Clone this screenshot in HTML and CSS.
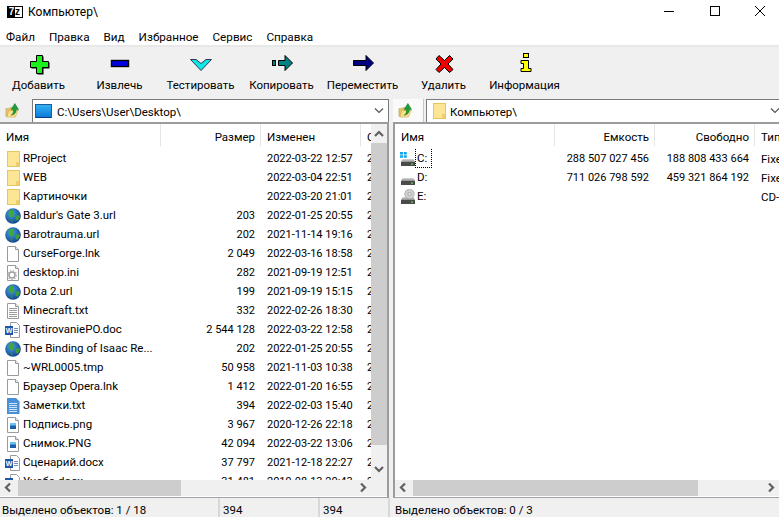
FILE: index.html
```html
<!DOCTYPE html>
<html lang="ru">
<head>
  <meta charset="UTF-8" />
  <title>Компьютер\</title>
  <link rel="stylesheet" href="styles.css">
</head>
<body>
  <svg class="defs" xmlns="http://www.w3.org/2000/svg">
    <defs>
      <radialGradient id="sea" cx="0.4" cy="0.35" r="0.7">
        <stop offset="0" stop-color="#4aa0e8"/><stop offset="1" stop-color="#0c3f8c"/>
      </radialGradient>
      <linearGradient id="screen" x1="0" y1="0" x2="0" y2="1">
        <stop offset="0" stop-color="#35b4f4"/><stop offset="1" stop-color="#0a78d8"/>
      </linearGradient>
      <linearGradient id="metal" x1="0" y1="0" x2="0" y2="1">
        <stop offset="0" stop-color="#d8d8d8"/><stop offset="1" stop-color="#8c8c8c"/>
      </linearGradient>
      <symbol id="i-folder" viewBox="0 0 16 16">
        <rect x="2.500" y="0.500" width="12" height="15" fill="#fde596" stroke="#e8c65f"/>
        <rect x="11" y="11" width="3" height="4" fill="#f0cd6c"/>
      </symbol>
      <symbol id="i-globe" viewBox="0 0 16 16">
        <circle cx="8" cy="8" r="7.800" fill="url(#sea)"/>
        <path d="M4 2.500c2-1 4-1 5 0l-1 2.500 1.500 2-2 2.500-2-.5-2-3z" fill="#3fa83c"/>
        <path d="M10.500 8l3.500-1 1 2-2.500 4-2-1.500z" fill="#3f9c3a"/>
        <path d="M5 11l2 .5 .5 3-1.500-.5z" fill="#2f8a36"/>
      </symbol>
      <symbol id="i-file" viewBox="0 0 16 16">
        <path d="M2.500 .5h8l3 3v12h-11z" fill="#fff" stroke="#9a9a9a"/>
        <path d="M10.500 .5v3h3" fill="#eee" stroke="#9a9a9a"/>
      </symbol>
      <symbol id="i-ini" viewBox="0 0 16 16">
        <use href="#i-file"/>
        <circle cx="7" cy="10" r="3" fill="none" stroke="#a0a0a0" stroke-width="1.600"/>
        <circle cx="7" cy="10" r="4.400" fill="none" stroke="#b4b4b4" stroke-width="1.200" stroke-dasharray="1.500 1.500"/>
      </symbol>
      <symbol id="i-txt" viewBox="0 0 16 16">
        <use href="#i-file"/>
        <path d="M4 5.500h8M4 7.500h8M4 9.500h8M4 11.500h8M4 13.500h8" stroke="#9c9c9c"/>
      </symbol>
      <symbol id="i-note" viewBox="0 0 16 16">
        <path d="M2 0h9l3.500 3.500V16H2z" fill="#4a90d8"/>
        <path d="M4 5.500h8M4 7.500h8M4 9.500h8M4 11.500h8M4 13.500h8" stroke="#cfe4f8"/>
      </symbol>
      <symbol id="i-png" viewBox="0 0 16 16">
        <use href="#i-file"/>
        <rect x="5" y="6" width="6" height="6" fill="#1d5fa8"/>
        <rect x="5" y="6" width="6" height="2.500" fill="#6cc0ee"/>
      </symbol>
      <symbol id="i-word" viewBox="0 0 16 16">
        <path d="M5.500 .5h6l3 3v12h-9z" fill="#fff" stroke="#9a9a9a"/>
        <path d="M9 6.500h4M9 8.500h4M9 10.500h4" stroke="#6a8fc0"/>
        <rect x="0" y="4" width="8" height="9" fill="#1f57a8"/>
        <text x="4" y="11" class="word-mark">W</text>
      </symbol>
      <symbol id="i-drive" viewBox="0 0 16 16">
        <path d="M2.500 8h11l1.500 3H1z" fill="url(#metal)"/>
        <rect x="1" y="11" width="14" height="4" fill="#4a4a4a"/>
        <rect x="11" y="12.500" width="2" height="1.200" fill="#4fe04f"/>
      </symbol>
      <symbol id="i-drive-c" viewBox="0 0 16 16">
        <use href="#i-drive"/>
        <path d="M0 1h3v2.500H0zM3.800 1h3v2.500h-3zM0 4.300h3v2.500H0zM3.800 4.300h3v2.500h-3z" fill="#12a4ee"/>
      </symbol>
      <symbol id="i-drive-e" viewBox="0 0 16 16">
        <use href="#i-drive"/>
        <circle cx="9.500" cy="5" r="4.800" fill="#cfcfcf" stroke="#9a9a9a" stroke-width=".6"/>
        <circle cx="9.500" cy="5" r="1.500" fill="#f4f4f4" stroke="#808080" stroke-width=".6"/>
      </symbol>
      <symbol id="i-up" viewBox="0 0 16 16">
        <path d="M1 6h3l1-1h5v9H1z" fill="#e8c468" stroke="#b89a48" stroke-width=".6"/>
        <path d="M2 15l2-7h10l-3 7z" fill="#fbe08a" stroke="#c8a850" stroke-width=".6"/>
        <path d="M6.500 13c2.500-1 2.500-3 2.500-6H6.500L10.500.5 14.500 7H12c0 3-1.500 5.500-5.500 6z" fill="#18a038" stroke="#0e6a24" stroke-width=".5"/>
      </symbol>
    </defs>
  </svg>

  <header class="titlebar">
    <span class="app-logo"><b>7</b>z</span>
    <span class="title-text">Компьютер\</span>
    <div class="win-buttons">
      <span class="win-btn"><svg width="12" height="12" viewBox="0 0 12 12"><path d="M1 6.500h10" stroke="#000"/></svg></span>
      <span class="win-btn"><svg width="12" height="12" viewBox="0 0 12 12"><rect x="1.500" y="1.500" width="9" height="9" fill="none" stroke="#000"/></svg></span>
      <span class="win-btn"><svg width="12" height="12" viewBox="0 0 12 12"><path d="M1 1l10 10M11 1L1 11" stroke="#000"/></svg></span>
    </div>
  </header>

  <nav class="menu">
    <span>Файл</span><span>Правка</span><span>Вид</span><span>Избранное</span><span>Сервис</span><span>Справка</span>
  </nav>

  <div class="toolbar">
    <div class="tool">
      <svg class="tool-icon" viewBox="0 0 24 24">
        <path d="M10.500 4.500h6v6h6v6h-6v6h-6v-6h-6v-6h6z" fill="#000"/>
        <path d="M9.500 3.500h6v6h6v6h-6v6h-6v-6h-6v-6h6z" fill="#1cf01c" stroke="#000"/>
      </svg>
      <span>Добавить</span>
    </div>
    <div class="tool">
      <svg class="tool-icon" viewBox="0 0 24 24">
        <rect x="3.500" y="8.500" width="17" height="6" fill="#0000e6" stroke="#000" stroke-width="1.400"/>
      </svg>
      <span>Извлечь</span>
    </div>
    <div class="tool">
      <svg class="tool-icon" viewBox="0 0 24 24">
        <path d="M1.500 7.500H7l5 4 5-4h5.500L12 18.500z" fill="#0fe6e6" stroke="#335"/>
      </svg>
      <span>Тестировать</span>
    </div>
    <div class="tool">
      <svg class="tool-icon" viewBox="0 0 24 24">
        <rect x="2.500" y="8.500" width="3" height="5" fill="#008080" stroke="#000"/>
        <path d="M8.500 8.500H15V3.500L22.500 11 15 18.500V13.500H8.500z" fill="#008080" stroke="#000"/>
      </svg>
      <span>Копировать</span>
    </div>
    <div class="tool">
      <svg class="tool-icon" viewBox="0 0 24 24">
        <path d="M2.500 8.500H15V3.500L22.500 11 15 18.500V13.500H2.500z" fill="#000080" stroke="#000"/>
      </svg>
      <span>Переместить</span>
    </div>
    <div class="tool">
      <svg class="tool-icon" viewBox="0 0 24 24">
        <path d="M7 3.500l5.500 5 5-5 3.500 3.500-5 5 5 5.500-3.500 3-5-5-5.500 5L4 17.500l5-5.500-5-5z" fill="#f00000" stroke="#000"/>
      </svg>
      <span>Удалить</span>
    </div>
    <div class="tool">
      <svg class="tool-icon" viewBox="0 0 24 24">
        <rect x="10.500" y="1.500" width="5" height="4" fill="#ffff00" stroke="#000"/>
        <path d="M8 8.500h7.500v8h2.500v3H8v-3h2.500v-5H8z" fill="#ffff00" stroke="#000"/>
      </svg>
      <span>Информация</span>
    </div>
  </div>

  <main class="panes">
    <section class="pane pane-left">
      <div class="pathbar">
        <span class="up-btn"><svg class="up-icon" viewBox="0 0 16 16"><use href="#i-up"/></svg></span>
        <div class="combo">
          <svg class="combo-icon" width="17" height="15" viewBox="0 0 17 15"><rect x=".5" y=".5" width="16" height="13" fill="url(#screen)" stroke="#1c5c9c"/><path d="M1 13.500h15" stroke="#0b3d78"/></svg>
          <span class="combo-text">C:\Users\User\Desktop\</span>
          <svg class="combo-arrow" width="10" height="6" viewBox="0 0 10 6"><path d="M1 .5l4 4 4-4" fill="none" stroke="#555" stroke-width="1.200"/></svg>
        </div>
      </div>
      <div class="listbox">
        <div class="list-main">
          <div class="list-wrap">
            <table class="files">
              <thead>
                <tr><th class="c-name">Имя</th><th class="c-num">Размер</th><th class="c-date">Изменен</th><th class="c-last">Создан</th></tr>
              </thead>
              <tbody>
                <tr><td><svg class="icon"><use href="#i-folder"/></svg>RProject</td><td class="num"></td><td class="date">2022-03-22 12:57</td><td class="date">2</td></tr>
                <tr><td><svg class="icon"><use href="#i-folder"/></svg>WEB</td><td class="num"></td><td class="date">2022-03-04 22:51</td><td class="date">2</td></tr>
                <tr><td><svg class="icon"><use href="#i-folder"/></svg>Картиночки</td><td class="num"></td><td class="date">2022-03-20 21:01</td><td class="date">2</td></tr>
                <tr><td><svg class="icon"><use href="#i-globe"/></svg>Baldur's Gate 3.url</td><td class="num">203</td><td class="date">2022-01-25 20:55</td><td class="date">2</td></tr>
                <tr><td><svg class="icon"><use href="#i-globe"/></svg>Barotrauma.url</td><td class="num">202</td><td class="date">2021-11-14 19:16</td><td class="date">2</td></tr>
                <tr><td><svg class="icon"><use href="#i-file"/></svg>CurseForge.lnk</td><td class="num">2 049</td><td class="date">2022-03-16 18:58</td><td class="date">2</td></tr>
                <tr><td><svg class="icon"><use href="#i-ini"/></svg>desktop.ini</td><td class="num">282</td><td class="date">2021-09-19 12:51</td><td class="date">2</td></tr>
                <tr><td><svg class="icon"><use href="#i-globe"/></svg>Dota 2.url</td><td class="num">199</td><td class="date">2021-09-19 15:15</td><td class="date">2</td></tr>
                <tr><td><svg class="icon"><use href="#i-txt"/></svg>Minecraft.txt</td><td class="num">332</td><td class="date">2022-02-26 18:30</td><td class="date">2</td></tr>
                <tr><td><svg class="icon"><use href="#i-word"/></svg>TestirovaniePO.doc</td><td class="num">2 544 128</td><td class="date">2022-03-22 12:58</td><td class="date">2</td></tr>
                <tr><td><svg class="icon"><use href="#i-globe"/></svg>The Binding of Isaac Re...</td><td class="num">202</td><td class="date">2022-01-25 20:55</td><td class="date">2</td></tr>
                <tr><td><svg class="icon"><use href="#i-file"/></svg>~WRL0005.tmp</td><td class="num">50 958</td><td class="date">2021-11-03 10:38</td><td class="date">2</td></tr>
                <tr><td><svg class="icon"><use href="#i-file"/></svg>Браузер Opera.lnk</td><td class="num">1 412</td><td class="date">2022-01-20 16:55</td><td class="date">2</td></tr>
                <tr><td><svg class="icon"><use href="#i-note"/></svg>Заметки.txt</td><td class="num">394</td><td class="date">2022-02-03 15:40</td><td class="date">2</td></tr>
                <tr><td><svg class="icon"><use href="#i-png"/></svg>Подпись.png</td><td class="num">3 967</td><td class="date">2020-12-26 22:18</td><td class="date">2</td></tr>
                <tr><td><svg class="icon"><use href="#i-png"/></svg>Снимок.PNG</td><td class="num">42 094</td><td class="date">2022-03-22 13:06</td><td class="date">2</td></tr>
                <tr><td><svg class="icon"><use href="#i-word"/></svg>Сценарий.docx</td><td class="num">37 797</td><td class="date">2021-12-18 22:27</td><td class="date">2</td></tr>
                <tr><td><svg class="icon"><use href="#i-word"/></svg>Учеба.docx</td><td class="num">31 481</td><td class="date">2019-08-13 20:43</td><td class="date">2</td></tr>
              </tbody>
            </table>
          </div>
          <div class="vscroll">
            <svg class="arrow" width="16" height="19" viewBox="0 0 16 19"><path d="M4 12l4-4 4 4" fill="none" stroke="#606060" stroke-width="2.200"/></svg>
            <div class="vthumb"></div>
            <svg class="arrow arrow-down" width="16" height="19" viewBox="0 0 16 19"><path d="M4 7l4 4 4-4" fill="none" stroke="#606060" stroke-width="2.200"/></svg>
          </div>
        </div>
        <div class="hscroll hscroll-left">
          <svg class="arrow" width="17" height="16" viewBox="0 0 17 16"><path d="M10 3.500L6 7.500l4 4" fill="none" stroke="#606060" stroke-width="2.200"/></svg>
          <div class="hthumb"></div>
          <svg class="arrow" width="17" height="16" viewBox="0 0 17 16"><path d="M7 3.500l4 4-4 4" fill="none" stroke="#606060" stroke-width="2.200"/></svg>
          <div class="scroll-corner"></div>
        </div>
      </div>
    </section>

    <section class="pane pane-right">
      <div class="pathbar">
        <span class="up-btn up-btn-light"><svg class="up-icon" viewBox="0 0 16 16"><use href="#i-up"/></svg></span>
        <div class="combo combo-right">
          <svg class="combo-icon" width="16" height="16"><use href="#i-folder"/></svg>
          <span class="combo-text">Компьютер\</span>
          <svg class="combo-arrow" width="10" height="6" viewBox="0 0 10 6"><path d="M1 .5l4 4 4-4" fill="none" stroke="#555" stroke-width="1.200"/></svg>
        </div>
      </div>
      <div class="listbox">
        <div class="list-main">
          <div class="list-wrap">
            <table class="drives">
              <thead>
                <tr><th class="c-name">Имя</th><th class="c-num">Емкость</th><th class="c-num">Свободно</th><th class="c-type">Тип</th></tr>
              </thead>
              <tbody>
                <tr><td><svg class="icon"><use href="#i-drive-c"/></svg><span class="focused">C:</span></td><td class="num">288 507 027 456</td><td class="num">188 808 433 664</td><td class="type">Fixed</td></tr>
                <tr><td><svg class="icon"><use href="#i-drive"/></svg>D:</td><td class="num">711 026 798 592</td><td class="num">459 321 864 192</td><td class="type">Fixed</td></tr>
                <tr><td><svg class="icon"><use href="#i-drive-e"/></svg>E:</td><td class="num"></td><td class="num"></td><td class="type">CD-ROM</td></tr>
              </tbody>
            </table>
          </div>
        </div>
        <div class="hscroll">
          <svg class="arrow" width="17" height="16" viewBox="0 0 17 16"><path d="M10 3.500L6 7.500l4 4" fill="none" stroke="#606060" stroke-width="2.200"/></svg>
          <div class="hthumb hthumb-right"></div>
          <svg class="arrow" width="17" height="16" viewBox="0 0 17 16"><path d="M7 3.500l4 4-4 4" fill="none" stroke="#606060" stroke-width="2.200"/></svg>
        </div>
      </div>
    </section>
  </main>

  <footer class="status">
    <span class="st-a">Выделено объектов: 1 / 18</span>
    <span class="st-b">394</span>
    <span class="st-c">394</span>
    <span class="st-d">Выделено объектов: 0 / 3</span>
  </footer>
</body>
</html>
```

FILE: styles.css
```css
html, body { margin: 0; height: 100%; }
body {
  width: 779px;
  height: 517px;
  overflow: hidden;
  background: #f0f0f0;
  color: #000;
  font-family: Roboto, "Noto Sans", sans-serif;
  font-size: 11.5px;
}
.defs { display: block; width: 0; height: 0; }
.word-mark { font: bold 7px "Liberation Sans", sans-serif; fill: #fff; text-anchor: middle; }

.titlebar { display: flex; align-items: center; height: 26px; background: #fff; padding-left: 7px; }
.app-logo {
  width: 14px;
  height: 10px;
  border: 1px solid #000;
  background: #fff;
  display: flex;
  font: bold 10px/10px "Liberation Sans", sans-serif;
  margin-bottom: 2px;
}
.app-logo b { background: #000; color: #fff; width: 7px; text-align: center; }
.title-text { margin-left: 5px; margin-bottom: 2px; font-size: 12px; }
.win-buttons { display: flex; margin-left: auto; margin-right: -4px; margin-bottom: 4px; }
.win-btn { width: 45.500px; height: 22px; display: flex; align-items: center; justify-content: center; }

.menu { display: flex; gap: 14px; height: 19px; line-height: 22px; background: #fff; padding-left: 6px; font-size: 11.7px; }

.toolbar {
  display: flex;
  height: 53px;
  border-top: 2px solid #e8e8e8;
  margin-left: -2px;
  padding-top: 5px;
  box-sizing: border-box;
}
.tool { width: 81px; display: flex; flex-direction: column; align-items: center; }
.tool-icon { width: 24px; height: 24px; margin-bottom: 2px; }

.panes { display: flex; height: 400px; }
.pane-left { width: 389px; }
.pane-right { flex: 1; margin-left: 4px; min-width: 0; }
.pathbar { display: flex; height: 24px; padding-top: 1px; box-sizing: border-box; }
.up-btn { width: 31px; display: flex; align-items: center; justify-content: center; padding-right: 6px; box-sizing: border-box; }
.up-btn-light { background: #fafafa; border-right: 1px solid #c8c8c8; margin-right: 2px; }
.pane-left .up-btn { margin-right: 1px; }
.up-icon { width: 15px; height: 15px; }
.icon { width: 16px; height: 16px; flex: none; }
.combo {
  flex: 1;
  display: flex;
  align-items: center;
  background: #fff;
  border: 1px solid #7a7a7a;
  border-bottom: none;
  box-sizing: border-box;
  padding: 0 4px 0 2px;
  min-width: 0;
}
.combo-right { border-right: none; margin-right: -5px; padding-left: 4px; }
.combo-text { margin-left: 5px; padding-top: 1px; }
.combo-right .combo-text { margin-left: 3px; }
.combo-arrow { margin-left: auto; }

.listbox {
  height: 376px;
  box-sizing: border-box;
  background: #fff;
  border-top: 2px solid #9c9c9c;
  border-bottom: 1px solid #a0a0a8;
  padding-bottom: 1px;
  display: flex;
  flex-direction: column;
}
.pane-left .listbox { border-right: 2px solid #9c9c9c; }
.pane-right .listbox { border-left: 2px solid #9c9c9c; }
.list-main { display: flex; height: 356px; }
.list-wrap { flex: 1; overflow: hidden; min-width: 0; }

table { border-collapse: collapse; table-layout: fixed; }
.files { width: 500px; }
.drives { width: 500px; }
th { height: 25px; padding: 0 5px 0 6px; font-weight: normal; text-align: left; box-sizing: border-box; }
th + th { background: linear-gradient(#e5e5e5, #e5e5e5) left top / 1px 22px no-repeat; }
.files .c-name { width: 160px; }
.drives .c-name { width: 159px; }
.c-num { width: 100px; text-align: right; }
.c-date { width: 100px; padding-left: 7px; }
.c-last { width: 140px; padding-left: 7px; }
.c-type { width: 141px; padding-left: 7px; }
td { height: 19px; padding: 0; white-space: nowrap; overflow: hidden; }
td:first-child { padding-left: 5px; }
td .icon { vertical-align: -5px; margin-right: 2px; }
.drives td .icon { margin-right: 0; }
.drives td:first-child { padding-left: 5px; }
.num { text-align: right; padding-right: 5px; font-size: 11px; }
.date, .type { padding-left: 7px; font-size: 11px; }
.type { font-size: 11.5px; }
.focused { outline: 1px dotted #000; padding: 2px 4px 2px 1px; }
.drives tr + tr td .icon { margin-right: 1px; }

.vscroll { width: 16px; background: #f0f0f0; display: flex; flex-direction: column; }
.arrow { display: block; flex: none; }
.vthumb { height: 302px; background: #cdcdcd; }
.arrow-down { margin-top: auto; margin-bottom: 1px; }
.hscroll { display: flex; height: 16px; background: #f0f0f0; }
.hthumb { width: 163px; background: #cdcdcd; margin-left: 1px; }
.hthumb-right { width: 285px; }
.hscroll .arrow:last-of-type { margin-left: auto; }
.scroll-corner { width: 16px; }

.status { display: flex; height: 19px; line-height: 25px; overflow: hidden; }
.status span { box-sizing: border-box; white-space: nowrap; border-left: 2px solid #d8d8d8; }
.status .st-a { width: 218px; padding-left: 2px; border-left: none; }
.st-b { width: 100px; padding-left: 3px; }
.st-c { width: 70px; padding-left: 3px; }
.st-d { flex: 1; padding-left: 5px; }
```
